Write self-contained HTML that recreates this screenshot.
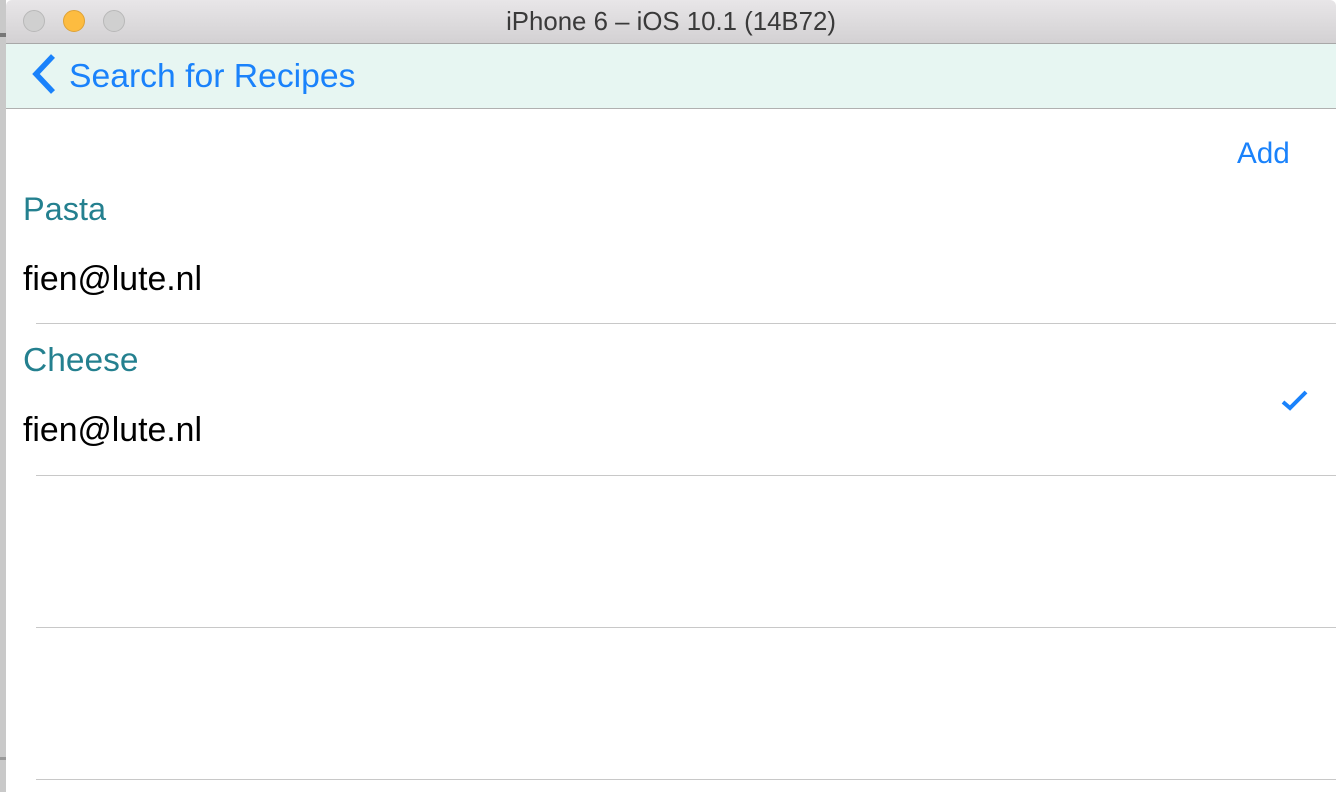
<!DOCTYPE html>
<html><head><meta charset="utf-8"><style>
body{margin:0;width:1336px;height:792px;overflow:hidden;background:#fff;font-family:"Liberation Sans",sans-serif;position:relative}
.a{position:absolute;white-space:nowrap}
</style></head><body>
<div class="a" style="left:0;top:0;width:6px;height:792px;background:#c9c9c9"></div>
<div class="a" style="left:0;top:33px;width:6px;height:4px;background:#777"></div>
<div class="a" style="left:0;top:757px;width:6px;height:3px;background:#999"></div>
<div class="a" style="left:6px;top:0;width:1330px;height:43px;background:linear-gradient(#e8e6e8,#d3d1d3);border-bottom:1px solid #a8a8a8;border-radius:6px 6px 0 0"></div>
<div class="a" style="left:23px;top:10px;width:22px;height:22px;border-radius:50%;background:#d0d0d0;border:1px solid #b8b8b8;box-sizing:border-box"></div>
<div class="a" style="left:63px;top:10px;width:22px;height:22px;border-radius:50%;background:#fdbc40;border:1px solid #dea236;box-sizing:border-box"></div>
<div class="a" style="left:103px;top:10px;width:22px;height:22px;border-radius:50%;background:#d0d0d0;border:1px solid #b8b8b8;box-sizing:border-box"></div>
<div class="a" style="left:6px;top:8px;width:1330px;text-align:center;font-size:25.8px;color:#3a3a3a">iPhone 6 – iOS 10.1 (14B72)</div>
<div class="a" style="left:6px;top:44px;width:1330px;height:64px;background:#e7f6f2;border-bottom:1px solid #b0b0b0"></div>
<svg class="a" style="left:28px;top:53px" width="32" height="44"><path d="M25 3 L8 21 L25 39" stroke="#1a82fb" stroke-width="5.5" fill="none"/></svg>
<div class="a" style="left:69px;top:57px;font-size:33.7px;color:#1a82fb">Search for Recipes</div>
<div class="a" style="left:1237px;top:137px;font-size:29.7px;color:#1a82fb">Add</div>
<div class="a" style="left:23px;top:191px;font-size:32.5px;color:#24808f">Pasta</div>
<div class="a" style="left:23px;top:260px;font-size:33.8px;color:#000">fien@lute.nl</div>
<div class="a" style="left:36px;top:323px;width:1300px;height:1px;background:#c8c8c8"></div>
<div class="a" style="left:23px;top:342px;font-size:33.5px;color:#24808f">Cheese</div>
<div class="a" style="left:23px;top:411px;font-size:33.8px;color:#000">fien@lute.nl</div>
<svg class="a" style="left:1280px;top:388px" width="32" height="24"><path d="M3 14 L10 20 L26 4" stroke="#1a82fb" stroke-width="4" fill="none"/></svg>
<div class="a" style="left:36px;top:475px;width:1300px;height:1px;background:#c8c8c8"></div>
<div class="a" style="left:36px;top:627px;width:1300px;height:1px;background:#c8c8c8"></div>
<div class="a" style="left:36px;top:779px;width:1300px;height:1px;background:#c8c8c8"></div>
</body></html>
